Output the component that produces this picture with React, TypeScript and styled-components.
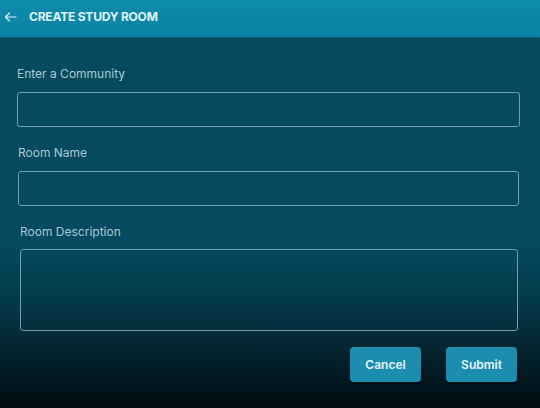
import React from "react";
import styled, { createGlobalStyle } from "styled-components";

const Global = createGlobalStyle`
  html, body { margin: 0; padding: 0; width: 540px; height: 408px; overflow: hidden; }
  body { font-family: Inter, "Noto Sans", sans-serif; }
  * { box-sizing: border-box; }
`;

const Page = styled.div`
  width: 540px;
  height: 408px;
  display: flex;
  flex-direction: column;
  background: linear-gradient(180deg, #054a5f 0%, #054a5f 60%, #043b4c 73%, #03222d 87%, #010b10 100%);
`;

const Header = styled.div`
  height: 38px;
  flex: none;
  display: flex;
  align-items: center;
  gap: 12px;
  padding: 0 0 4px 4px;
  background: linear-gradient(180deg, #108cad 0%, #0b81a1 100%);
  border-bottom: 1px solid #0b5f76;
`;

const Title = styled.h1`
  margin: 0;
  font-size: 12px;
  font-weight: 700;
  color: #dff3f7;
  letter-spacing: -0.2px;
`;

const Form = styled.div`
  display: flex;
  flex-direction: column;
  padding: 28px 20px 0 17px;
`;

const Field = styled.div<{ $left?: number; $right?: number; $gap?: number }>`
  display: flex;
  flex-direction: column;
  margin: 0 ${(p) => p.$right ?? 0}px 18px ${(p) => p.$left ?? 0}px;
  gap: ${(p) => p.$gap ?? 11}px;
`;

const Label = styled.label`
  font-size: 12px;
  color: #a9c9d2;
  line-height: 15px;
`;

const Input = styled.div<{ $h: number }>`
  height: ${(p) => p.$h}px;
  border: 1px solid #6f9fae;
  border-radius: 3px;
  background: transparent;
`;

const Actions = styled.div`
  display: flex;
  justify-content: flex-end;
  gap: 25px;
  padding: 0 3px 0 0;
  margin-top: -2px;
`;

const Button = styled.button`
  width: 71px;
  height: 35px;
  border: none;
  border-radius: 4px;
  background: #1a8db0;
  color: #e6f6fa;
  font-family: inherit;
  font-size: 12px;
  font-weight: 600;
  box-shadow: 0 1px 3px rgba(0, 0, 0, 0.4);
`;

export default function App() {
  return (
    <>
      <Global />
      <Page>
        <Header>
          <svg width="13" height="12" viewBox="0 0 13 12" fill="none" stroke="#dff3f7" strokeWidth="1.2" strokeLinecap="round" strokeLinejoin="round">
            <path d="M12 6H1.5M5.5 2L1.5 6l4 4" />
          </svg>
          <Title>CREATE STUDY ROOM</Title>
        </Header>
        <Form>
          <Field>
            <Label>Enter a Community</Label>
            <Input $h={35} />
          </Field>
          <Field $left={1} $right={1}>
            <Label>Room Name</Label>
            <Input $h={35} />
          </Field>
          <Field $left={3} $right={2} $gap={10}>
            <Label>Room Description</Label>
            <Input $h={82} />
          </Field>
          <Actions>
            <Button>Cancel</Button>
            <Button>Submit</Button>
          </Actions>
        </Form>
      </Page>
    </>
  );
}
